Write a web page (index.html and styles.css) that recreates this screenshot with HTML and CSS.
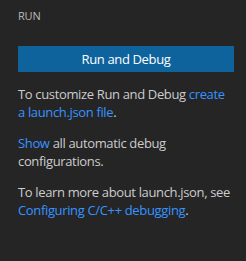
FILE: index.html
```html
<!DOCTYPE html>
<html lang="en">
<head>
  <meta charset="utf-8">
  <title>Run</title>
  <link rel="stylesheet" href="styles.css">
</head>
<body>
  <div class="pane">
    <h2 class="pane-title">RUN</h2>
    <div class="welcome">
      <button class="button-primary">Run and Debug</button>
      <p class="welcome-text">To customize Run and Debug <a href="#" class="link">create a launch.json file</a>.</p>
      <p class="welcome-text"><a href="#" class="link">Show</a> all automatic debug configurations.</p>
      <p class="welcome-text">To learn more about launch.json, see <a href="#" class="link">Configuring C/C++ debugging</a>.</p>
    </div>
  </div>
</body>
</html>
```

FILE: styles.css
```css
*, *::before, *::after {
  margin: 0;
  padding: 0;
  box-sizing: border-box;
}

html {
  font-size: 13px;
}

body {
  min-height: 100vh;
  background-color: #252526;
  color: #CCCCCC;
  font-family: "Open Sans", "Noto Sans", sans-serif;
  letter-spacing: -0.35px;
}

.pane {
  padding: 0 12px 0 18px;
}

.pane-title {
  height: 35px;
  padding-top: 9px;
  font-size: 11px;
  font-weight: 400;
  line-height: 14px;
  letter-spacing: -0.2px;
  color: #BBBBBB;
}

.welcome {
  padding-top: 11px;
}

.button-primary {
  display: block;
  width: 100%;
  height: 26px;
  margin-bottom: 13px;
  border: none;
  background-color: #0E639C;
  color: #FFFFFF;
  font-family: inherit;
  font-size: 13px;
  letter-spacing: inherit;
}

.welcome-text {
  margin-bottom: 13px;
  line-height: 18px;
}

.link {
  color: #3794FF;
  text-decoration: none;
}
```
